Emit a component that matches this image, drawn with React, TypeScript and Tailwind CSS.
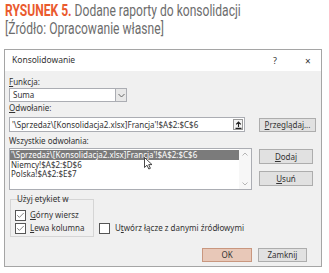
import { Check } from "lucide-react";

const ui = { fontFamily: '"Noto Sans", "Open Sans", sans-serif' };
const head = { fontFamily: 'Roboto, "Liberation Sans", sans-serif' };

function Btn({ children, className = "" }: { children: React.ReactNode; className?: string }) {
  return (
    <div
      className={
        "flex items-center justify-center border border-[#adadad] bg-[#e1e1e1] text-[8px] text-[#333]" +
        " " +
        className
      }
    >
      {children}
    </div>
  );
}

function Box({ checked }: { checked: boolean }) {
  return (
    <div className="flex h-[11px] w-[11px] items-center justify-center border border-[#555] bg-white">
      {checked && <Check size={9} strokeWidth={1.6} color="#333" />}
    </div>
  );
}

export default function App() {
  return (
    <div className="h-[273px] w-[329px] overflow-hidden bg-white" style={ui}>
      <div
        className="w-[440px] origin-top-left scale-x-[0.71] pl-[7px] pt-[1px] text-[17px] leading-[18px] whitespace-nowrap text-[#6d6d6d]"
        style={head}
      >
        <div>
          <span className="font-bold text-[#ea5a2e]">RYSUNEK 5.</span> Dodane raporty do konsolidacji
        </div>
        <div>[Źródło: Opracowanie własne]</div>
      </div>

      <div className="ml-[4px] mt-[12px] h-[218px] w-[318px] border border-[#a5a5a5] bg-[#f0f0f0] text-[#333]">
        <div className="flex h-[21px] items-center bg-white pl-[7px] text-[8.5px]">
          <span className="grow">Konsolidowanie</span>
          <span className="w-[32px] text-[9px]">?</span>
          <span className="w-[16px] text-[10px] leading-none">×</span>
        </div>

        <div className="pl-[4px] pr-[5px] text-[8px]">
          <div className="mt-[6px] h-[10px] leading-[10px]">
            <u>F</u>unkcja:
          </div>
          <div className="mt-[1px] flex h-[14px] w-[118px] items-center border border-[#abadb3] bg-white">
            <span className="grow pl-[3px] leading-none">Suma</span>
            <div className="flex h-[12px] w-[11px] items-center justify-center border-l border-[#abadb3] bg-[#e8e8e8]">
              <svg width="7" height="5" viewBox="0 0 7 5">
                <path d="M0.5 1 L3.5 4 L6.5 1" fill="none" stroke="#666" strokeWidth="1" />
              </svg>
            </div>
          </div>
          <div className="mt-[1px] h-[10px] leading-[10px]">
            <u>O</u>dwołanie:
          </div>

          <div className="mt-[4px] flex items-center">
            <div className="flex h-[15px] w-[236px] items-center border border-[#abadb3] bg-white">
              <span className="grow pl-[2px] leading-none whitespace-nowrap">
                '\Sprzedaż\[Konsolidacja2.xlsx]Francja'!$A$2:$C$6
              </span>
              <div className="mr-[1px] flex h-[11px] w-[10px] items-center justify-center border border-[#999] bg-[#f4f4f4]">
                <svg width="7" height="8" viewBox="0 0 7 8">
                  <path d="M3.5 1 V6 M1.2 3.3 L3.5 1 L5.8 3.3 M0.5 7.4 H6.5" fill="none" stroke="#222" strokeWidth="1.1" />
                </svg>
              </div>
            </div>
            <Btn className="ml-[14px] h-[14px] w-[57px]">
              <span>
                <u>P</u>rzeglądaj...
              </span>
            </Btn>
          </div>

          <div className="mt-[4px] h-[10px] leading-[10px]">Wszystkie odwołania:</div>

          <div className="mt-[2px] flex items-start">
            <div className="relative flex h-[42px] w-[243px] border border-[#abadb3] bg-white">
              <div className="grow pt-[1px] leading-[9.5px]">
                <div className="bg-[#7b7b7b] pl-[1px] whitespace-nowrap text-white">
                  '\Sprzedaż\[Konsolidacja2.xlsx]Francja'!$A$2:$C$6
                </div>
                <div className="pl-[1px]">Niemcy!$A$2:$D$6</div>
                <div className="pl-[1px]">Polska!$A$2:$E$7</div>
              </div>
              <div className="flex w-[12px] flex-col items-center justify-between bg-[#f7f7f7] py-[3px]">
                <svg width="6" height="4" viewBox="0 0 6 4">
                  <path d="M0.5 3.5 L3 1 L5.5 3.5" fill="none" stroke="#b5b5b5" strokeWidth="1" />
                </svg>
                <svg width="6" height="4" viewBox="0 0 6 4">
                  <path d="M0.5 0.5 L3 3 L5.5 0.5" fill="none" stroke="#b5b5b5" strokeWidth="1" />
                </svg>
              </div>
              <svg className="absolute left-[134px] top-[8px]" width="9" height="13" viewBox="0 0 9 13">
                <path d="M0.5 0.5 V10.5 L3 8.2 L4.8 12 L6.4 11.3 L4.7 7.6 L8 7.6 Z" fill="white" stroke="#333" strokeWidth="0.9" />
              </svg>
            </div>
            <div className="ml-[7px] flex flex-col gap-[7px] pt-[1px]">
              <Btn className="h-[15px] w-[54px]">
                <span>
                  <u>D</u>odaj
                </span>
              </Btn>
              <Btn className="h-[15px] w-[54px]">
                <span>
                  <u>U</u>suń
                </span>
              </Btn>
            </div>
          </div>

          <div className="mt-[3px] flex items-end">
            <div className="ml-[1px] w-[84px]">
              <div className="h-[11px] pl-[7px] leading-[11px]">Użyj etykiet w</div>
              <div className="-mt-[5px] flex h-[38px] flex-col justify-end gap-[1px] border border-[#d5d5d5] pb-[2px] pl-[4px]">
                <div className="flex h-[12px] items-center gap-[4px]">
                  <Box checked />
                  <span>
                    <u>G</u>órny wiersz
                  </span>
                </div>
                <div className="flex h-[12px] items-center gap-[4px]">
                  <Box checked />
                  <span>
                    <u>L</u>ewa kolumna
                  </span>
                </div>
              </div>
            </div>
            <div className="mb-[3px] ml-[5px] flex h-[12px] items-center gap-[5px]">
              <Box checked={false} />
              <span>
                U<u>t</u>wórz łącze z danymi źródłowymi
              </span>
            </div>
          </div>

          <div className="mt-[11px] flex justify-end gap-[6px] pr-[9px]">
            <Btn className="h-[14px] w-[50px] border-[#c9977f] bg-[#e8c8b8]">OK</Btn>
            <Btn className="h-[14px] w-[49px]">Zamknij</Btn>
          </div>
        </div>
      </div>
    </div>
  );
}
